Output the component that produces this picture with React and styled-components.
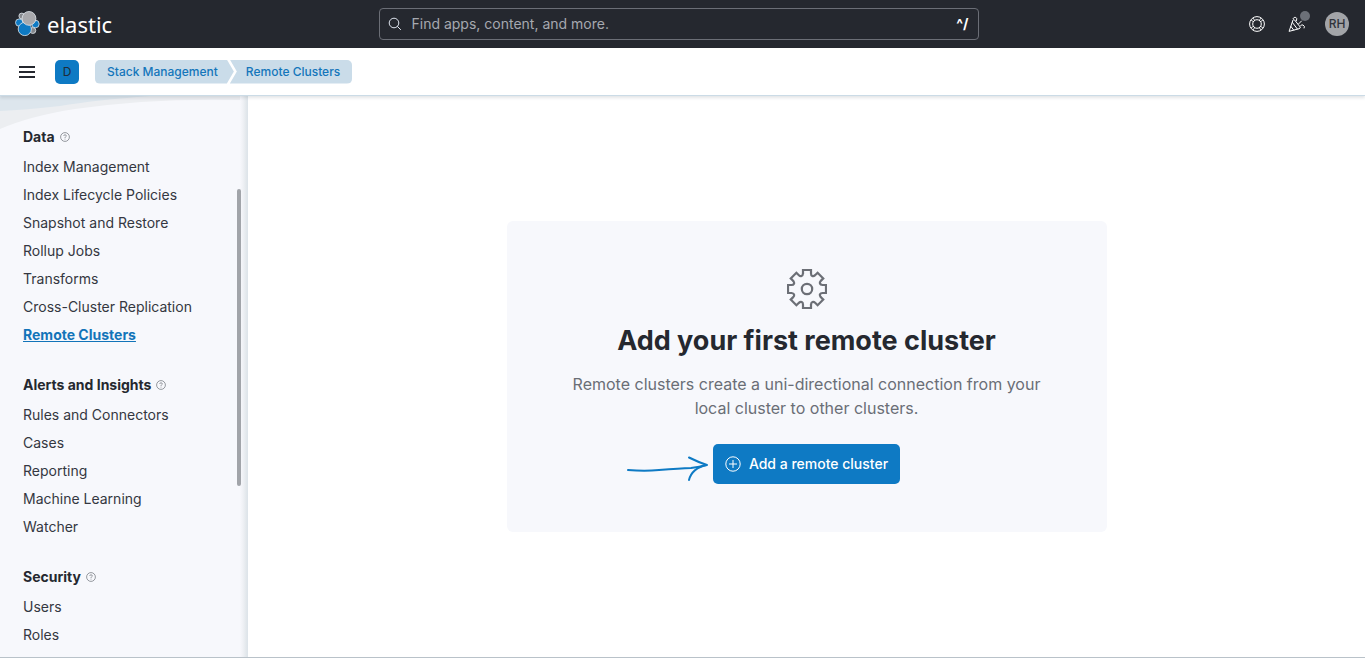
import React from "react";
import styled, { createGlobalStyle } from "styled-components";

const GlobalStyle = createGlobalStyle`
  * { box-sizing: border-box; }
  body {
    margin: 0;
    background: #ffffff;
    color: #343741;
    font-family: Inter, "Liberation Sans", sans-serif;
    font-size: 14px;
  }
`;

const Page = styled.div`
  display: flex;
  flex-direction: column;
  height: 100vh;
  overflow: hidden;
  border-bottom: 1px solid #b9c2c9;
`;

const TopBar = styled.header`
  display: grid;
  grid-template-columns: 1fr minmax(0, 600px) 1fr;
  gap: 16px;
  align-items: center;
  flex: none;
  height: 48px;
  padding: 0 16px 0 8px;
  background: #25282f;
`;

const Brand = styled.a`
  display: flex;
  align-items: center;
  gap: 7px;
  padding-left: 7px;
  color: #ffffff;
  text-decoration: none;
  font-family: "Noto Sans", sans-serif;
  font-size: 22px;
  line-height: 32px;
`;

const Search = styled.label`
  display: flex;
  align-items: center;
  gap: 10px;
  height: 32px;
  padding: 0 9px 0 8px;
  border: 1px solid #6b6e76;
  border-radius: 4px;
  color: #dfe5ef;
`;

const SearchInput = styled.input`
  flex: 1;
  min-width: 0;
  padding: 0;
  border: 0;
  outline: 0;
  background: transparent;
  color: #dfe5ef;
  font: 14px/20px Inter, sans-serif;
  &::placeholder { color: #a6a9af; opacity: 1; }
`;

const Shortcut = styled.kbd`
  font: 700 14px/20px Inter, sans-serif;
  color: #ffffff;
`;

const TopActions = styled.div`
  display: flex;
  justify-content: flex-end;
  align-items: center;
  gap: 16px;
`;

const IconButton = styled.button`
  position: relative;
  display: grid;
  place-items: center;
  width: 24px;
  height: 24px;
  padding: 0;
  border: 0;
  background: transparent;
  color: ${(p) => (p.$dark ? "#25282f" : "#ffffff")};
  cursor: pointer;
`;

const NewsDot = styled.span`
  position: absolute;
  top: -1px;
  right: -1px;
  width: 10px;
  height: 10px;
  border-radius: 50%;
  background: #6c7078;
`;

const Avatar = styled.button`
  width: 24px;
  height: 24px;
  padding: 0;
  border: 0;
  border-radius: 50%;
  background: #a2a4a8;
  color: #30333a;
  font: 500 12px/24px Inter, sans-serif;
  text-align: center;
`;

const SubBar = styled.div`
  position: relative;
  z-index: 2;
  display: flex;
  align-items: center;
  flex: none;
  height: 48px;
  padding: 0 15px;
  background: #ffffff;
  border-bottom: 1px solid #cbdbe6;
  box-shadow: 0 2px 3px rgba(60, 70, 85, 0.14);
`;

const Space = styled.button`
  width: 24px;
  height: 24px;
  margin: 0 16px;
  padding: 0;
  border: 0;
  border-radius: 5px;
  background: #0e7ac4;
  color: #1f2c38;
  font: 12px/24px Inter, sans-serif;
`;

const Crumbs = styled.nav`
  display: flex;
`;

const Crumb = styled.a`
  height: 24px;
  padding: 0 ${(p) => (p.$last ? 12 : 16)}px 0 ${(p) => (p.$last ? 16 : 12)}px;
  border-radius: ${(p) => (p.$last ? "0 5px 5px 0" : "5px 0 0 5px")};
  margin-left: ${(p) => (p.$last ? -4 : 0)}px;
  background: #cadce9;
  color: #1476bb;
  font-size: 12px;
  font-weight: 500;
  line-height: 24px;
  text-decoration: none;
  clip-path: ${(p) =>
    p.$last
      ? "polygon(0 0, 100% 0, 100% 100%, 0 100%, 7px 50%)"
      : "polygon(0 0, calc(100% - 7px) 0, 100% 50%, calc(100% - 7px) 100%, 0 100%)"};
`;

const Body = styled.div`
  display: flex;
  flex: 1;
  min-height: 0;
`;

const Sidebar = styled.aside`
  position: relative;
  flex: none;
  width: 248px;
  overflow: hidden;
  padding: 31px 23px 0;
  background: linear-gradient(to right, #f7f8fc 240px, #eff1f5 243px, #e3e8ec 246px, #dce3e9 248px);
`;

const Wave = styled.svg`
  position: absolute;
  top: 0;
  left: 0;
`;

const ScrollThumb = styled.span`
  position: absolute;
  top: 93px;
  right: 7px;
  width: 4px;
  height: 297px;
  border-radius: 2px;
  background: #a1a4a9;
`;

const NavSection = styled.section`
  position: relative;
  margin-bottom: 26px;
`;

const NavTitle = styled.h2`
  display: flex;
  align-items: center;
  gap: 5px;
  margin: 0 0 6px;
  color: #25282f;
  font-size: 14px;
  font-weight: 700;
  line-height: 20px;
`;

const NavList = styled.ul`
  margin: 0;
  padding: 0;
  list-style: none;
`;

const NavLink = styled.a`
  display: block;
  width: max-content;
  color: ${(p) => (p.$active ? "#1274b9" : "#343741")};
  font-weight: ${(p) => (p.$active ? 700 : 400)};
  line-height: 28px;
  text-decoration: ${(p) => (p.$active ? "underline" : "none")};
`;

const Main = styled.main`
  display: flex;
  align-items: center;
  justify-content: center;
  flex: 1;
  min-width: 0;
  padding: 24px;
`;

const Prompt = styled.section`
  display: flex;
  flex-direction: column;
  align-items: center;
  width: 100%;
  max-width: 600px;
  padding: 48px 64px;
  border-radius: 6px;
  background: #f7f8fc;
  text-align: center;
`;

const PromptTitle = styled.h1`
  margin: 16px 0 15px;
  color: #25282f;
  font-size: 27px;
  font-weight: 700;
  line-height: 32px;
`;

const PromptText = styled.p`
  margin: 0 0 24px;
  color: #6a6e76;
  font-size: 16px;
  line-height: 24px;
`;

const ActionWrap = styled.div`
  position: relative;
`;

const PrimaryButton = styled.button`
  display: flex;
  align-items: center;
  gap: 8px;
  height: 40px;
  padding: 0 12px;
  border: 0;
  border-radius: 5px;
  background: #0e7ac4;
  color: #ffffff;
  font: 500 14px/20px Inter, sans-serif;
  cursor: pointer;
`;

const Pointer = styled.svg`
  position: absolute;
  top: 8px;
  right: 100%;
`;

const ElasticLogo = () => (
  <svg width="25" height="26" viewBox="0 0 25 26" aria-hidden="true">
    <g stroke="#dfe6ec" strokeWidth="0.8">
      <circle cx="6.8" cy="5" r="2.9" fill="#85878c" />
      <circle cx="17.8" cy="19.5" r="3" fill="#85878c" />
      <circle cx="4.2" cy="11.6" r="3.7" fill="#0e7ac4" />
      <circle cx="20.4" cy="13" r="3.8" fill="#0e7ac4" />
      <circle cx="9.8" cy="18" r="6.6" fill="#0e7ac4" />
      <circle cx="14" cy="7.4" r="6.9" fill="#a8a8ac" />
    </g>
  </svg>
);

const SearchIcon = () => (
  <svg width="14" height="14" viewBox="0 0 14 14" fill="none" stroke="currentColor" aria-hidden="true">
    <circle cx="6" cy="6" r="4.8" />
    <path d="M9.5 9.5 12.6 12.6" strokeLinecap="round" />
  </svg>
);

const HelpRingIcon = () => (
  <svg width="16" height="16" viewBox="0 0 16 16" fill="none" stroke="currentColor" aria-hidden="true">
    <circle cx="8" cy="8" r="7.4" strokeWidth="1" />
    <circle cx="8" cy="8" r="4.3" strokeWidth="1" />
    <path d="M2.2 4.3 4.6 5.7M4.3 2.2 5.7 4.6M11.7 2.2 10.3 4.6M13.8 4.3 11.4 5.7M2.2 11.7 4.6 10.3M4.3 13.8 5.7 11.4M11.7 13.8 10.3 11.4M13.8 11.7 11.4 10.3" strokeWidth="0.9" />
  </svg>
);

const CheerIcon = () => (
  <svg width="18" height="16" viewBox="0 0 18 16" fill="none" stroke="currentColor" strokeLinejoin="round" strokeLinecap="round" aria-hidden="true">
    <path d="M1.2 15 5 4Q5.700 3 6.600 4L12.200 11Q12.700 12.200 11.400 12.600Z" />
    <path d="M4.400 6.500 9.400 13M3 10.500 5.600 14" />
    <path d="M5 2.600Q6 .7 7.800 1.400T8.400 4.800M10.500 8 13.500 5M12.600 9.800Q13.200 8.200 15 9 17.200 10 16.200 12" />
  </svg>
);

const MenuIcon = () => (
  <svg width="16" height="12" viewBox="0 0 16 12" fill="currentColor" aria-hidden="true">
    <path d="M0 0h16v2H0zM0 5h16v2H0zM0 10h16v2H0z" />
  </svg>
);

const QuestionIcon = () => (
  <svg width="10" height="10" viewBox="0 0 10 10" fill="none" stroke="#7c8087" strokeWidth="0.8" aria-hidden="true">
    <circle cx="5" cy="5" r="4.4" />
    <path d="M3.7 3.9Q3.8 2.8 5 2.8 6.3 2.8 6.3 3.9 6.3 4.6 5.5 5 5 5.3 5 5.9M5 6.7V7.5" />
  </svg>
);

const GEAR_TOOTH = "M-4-15V-19H4V-15.500C4-13 6-12 8.150-13.800";

const GearIcon = () => (
  <svg width="40" height="40" viewBox="-20 -20 40 40" fill="none" stroke="#6c6f76" strokeWidth="2.2" aria-hidden="true">
    {[0, 45, 90, 135, 180, 225, 270, 315].map((angle) => (
      <path key={angle} d={GEAR_TOOTH} transform={`rotate(${angle})`} />
    ))}
    <circle r="5.2" />
  </svg>
);

const PlusCircleIcon = () => (
  <svg width="16" height="16" viewBox="0 0 16 16" fill="none" stroke="currentColor" aria-hidden="true">
    <circle cx="8" cy="8" r="7.2" />
    <path d="M8 4v8M4 8h8" />
  </svg>
);

const SECTIONS = [
  {
    title: "Data",
    items: [
      "Index Management",
      "Index Lifecycle Policies",
      "Snapshot and Restore",
      "Rollup Jobs",
      "Transforms",
      "Cross-Cluster Replication",
      "Remote Clusters",
    ],
  },
  {
    title: "Alerts and Insights",
    items: ["Rules and Connectors", "Cases", "Reporting", "Machine Learning", "Watcher"],
  },
  { title: "Security", items: ["Users", "Roles"] },
];

const ACTIVE_ITEM = "Remote Clusters";

export default function App() {
  return (
    <>
      <GlobalStyle />
      <Page>
        <TopBar>
          <Brand href="#">
            <ElasticLogo />
            elastic
          </Brand>
          <Search>
            <SearchIcon />
            <SearchInput type="text" aria-label="Search" placeholder="Find apps, content, and more." />
            <Shortcut>^/</Shortcut>
          </Search>
          <TopActions>
            <IconButton aria-label="Help">
              <HelpRingIcon />
            </IconButton>
            <IconButton aria-label="News">
              <CheerIcon />
              <NewsDot />
            </IconButton>
            <Avatar>RH</Avatar>
          </TopActions>
        </TopBar>
        <SubBar>
          <IconButton $dark aria-label="Menu">
            <MenuIcon />
          </IconButton>
          <Space>D</Space>
          <Crumbs aria-label="Breadcrumbs">
            <Crumb href="#">Stack Management</Crumb>
            <Crumb href="#" $last>
              Remote Clusters
            </Crumb>
          </Crumbs>
        </SubBar>
        <Body>
          <Sidebar>
            <Wave width="240" height="34" viewBox="0 0 240 34" aria-hidden="true">
              <path d="M0 0H240V4Q150 2 75 13 30 20 0 33Z" fill="#eceef1" />
              <path d="M0 0H150Q95 4 60 10 25 14 0 15Z" fill="#dde6ed" />
            </Wave>
            {SECTIONS.map((section) => (
              <NavSection key={section.title}>
                <NavTitle>
                  {section.title}
                  <QuestionIcon />
                </NavTitle>
                <NavList>
                  {section.items.map((item) => (
                    <li key={item}>
                      <NavLink href="#" $active={item === ACTIVE_ITEM}>
                        {item}
                      </NavLink>
                    </li>
                  ))}
                </NavList>
              </NavSection>
            ))}
            <ScrollThumb />
          </Sidebar>
          <Main>
            <Prompt>
              <GearIcon />
              <PromptTitle>Add your first remote cluster</PromptTitle>
              <PromptText>
                Remote clusters create a uni-directional connection from your local cluster to other clusters.
              </PromptText>
              <ActionWrap>
                <Pointer width="88" height="32" viewBox="0 0 88 32" fill="none" stroke="#0e7ac4" strokeWidth="2" strokeLinecap="round" strokeLinejoin="round" aria-hidden="true">
                  <path d="M3 18Q20 19.500 34 18 55 16.500 66 16 75 15 81 13" />
                  <path d="M64 5.500Q73 10 82 13 67 16 64 28" />
                </Pointer>
                <PrimaryButton>
                  <PlusCircleIcon />
                  Add a remote cluster
                </PrimaryButton>
              </ActionWrap>
            </Prompt>
          </Main>
        </Body>
      </Page>
    </>
  );
}
